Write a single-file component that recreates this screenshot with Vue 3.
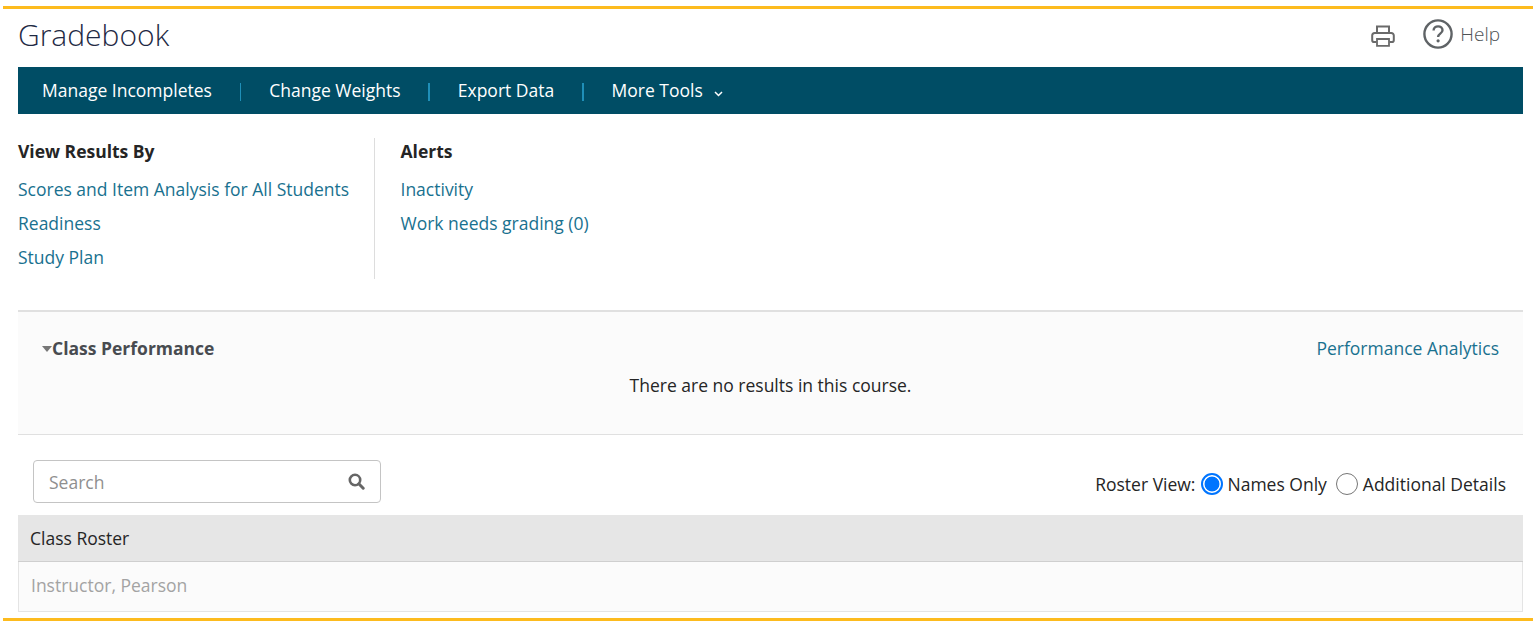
<script setup>
const nav = ['Manage Incompletes', 'Change Weights', 'Export Data']
const results = ['Scores and Item Analysis for All Students', 'Readiness', 'Study Plan']
const alerts = ['Inactivity', 'Work needs grading (0)']
</script>

<template>
  <div class="page">
    <header class="top">
      <h1>Gradebook</h1>
      <div class="tools">
        <svg class="print" width="24" height="22" viewBox="0 0 24 22" fill="none" stroke="#6a6a6a" stroke-width="2">
          <path d="M6 8V1.500h12V8" />
          <path d="M5.500 17H3A1.800 1.800 0 0 1 1.200 15.200V10.500A2.500 2.500 0 0 1 3.700 8h16.600A2.500 2.500 0 0 1 22.800 10.500v4.700A1.800 1.800 0 0 1 21 17h-2.500" />
          <path d="M6 14h12v6.800H6z" stroke-width="1.800" />
        </svg>
        <svg class="q" width="30" height="30" viewBox="0 0 30 30" fill="none">
          <circle cx="15" cy="15" r="13.600" stroke="#5f6366" stroke-width="2.400" />
          <path d="M10.600 11.600c0-2.700 2-4.200 4.500-4.200s4.400 1.500 4.400 3.800c0 3.400-4.400 3.400-4.400 6.700" stroke="#5f6366" stroke-width="2.400" />
          <circle cx="15.100" cy="21.800" r="1.600" fill="#5f6366" />
        </svg>
        <span class="help">Help</span>
      </div>
    </header>

    <nav class="nav">
      <template v-for="n in nav" :key="n">
        <a>{{ n }}</a>
        <i></i>
      </template>
      <a class="more">More Tools
        <svg width="9" height="6" viewBox="0 0 9 6" fill="none" stroke="#fff" stroke-width="1.500"><path d="M1 1l3.500 3.500L8 1" /></svg>
      </a>
    </nav>

    <section class="links">
      <div class="col first">
        <h2>View Results By</h2>
        <a v-for="r in results" :key="r">{{ r }}</a>
      </div>
      <div class="col">
        <h2>Alerts</h2>
        <a v-for="a in alerts" :key="a">{{ a }}</a>
      </div>
    </section>

    <section class="perf">
      <div class="perf-head">
        <h3><span class="tri"></span>Class Performance</h3>
        <a>Performance Analytics</a>
      </div>
      <p>There are no results in this course.</p>
    </section>

    <div class="filters">
      <div class="search">
        <span>Search</span>
        <svg width="17" height="17" viewBox="0 0 17 17" fill="none" stroke="#666">
          <circle cx="7" cy="7" r="5.200" stroke-width="2.600" />
          <path d="M10.800 10.800l4.400 4.400" stroke-width="3" stroke-linecap="round" />
        </svg>
      </div>
      <div class="roster">
        <span>Roster View:</span>
        <span class="radio on"></span>
        <span class="lbl">Names Only</span>
        <span class="radio"></span>
        <span>Additional Details</span>
      </div>
    </div>

    <div class="thead">Class Roster</div>
    <div class="trow">Instructor, Pearson</div>
  </div>
</template>

<style>
html, body { margin: 0; background: #fff; }
</style>

<style scoped>
.page {
  box-sizing: border-box;
  height: 615px;
  margin: 6px 0 0 3px;
  padding: 0 10px 0 15px;
  border-top: 3px solid #fdbb1e;
  border-bottom: 3px solid #fdbb1e;
  font-family: "Open Sans", sans-serif;
  font-size: 17.500px;
  color: #252525;
}
.top {
  height: 58px;
  display: flex;
  justify-content: space-between;
  align-items: center;
}
h1 {
  margin: 0 0 6px;
  font-size: 30px;
  font-weight: 300;
  color: #1f2a44;
  line-height: 1;
}
.tools {
  display: flex;
  align-items: center;
  padding-right: 23px;
  margin-top: -8px;
}
.print { margin: 4px 28px 0 0; }
.q { margin-right: 7px; }
.help { color: #4f5356; font-size: 19px; font-weight: 300; }
.nav {
  height: 47px;
  background: #004d65;
  display: flex;
  align-items: center;
  padding-left: 24px;
  color: #fff;
}
.nav i {
  width: 1.500px;
  height: 18px;
  background: #1f8fb8;
  margin: 2px 27.900px 0;
}
.nav a { line-height: 47px; }
.more svg { margin-left: 7px; }
.links {
  display: flex;
  margin-top: 24px;
  height: 141px;
}
.col {
  display: flex;
  flex-direction: column;
  align-items: flex-start;
}
.col.first {
  width: 356px;
  border-right: 1px solid #ddd;
  margin-right: 25.500px;
}
h2 {
  margin: 0 0 7px;
  font-size: 17.500px;
  line-height: 27px;
  font-weight: 700;
  color: #252525;
}
.col a {
  color: #19718f;
  line-height: 34px;
}
.perf {
  box-sizing: border-box;
  margin-top: 31px;
  height: 125px;
  background: #fbfbfb;
  border-top: 2px solid #e0e0e0;
  border-bottom: 1px solid #e0e0e0;
  padding: 23px 24px 0;
}
.perf-head {
  display: flex;
  justify-content: space-between;
  align-items: center;
  height: 26px;
}
h3 {
  margin: 0;
  font-size: 17.500px;
  font-weight: 700;
  color: #484b50;
  display: flex;
  align-items: center;
}
.tri {
  width: 0;
  height: 0;
  border: 5px solid transparent;
  border-top: 6px solid #777;
  border-bottom: 0;
  margin-top: 1px;
}
.perf-head a { color: #19718f; }
.perf p {
  margin: 11px 0 0;
  text-align: center;
  line-height: 26px;
}
.filters {
  height: 80px;
  display: flex;
  justify-content: space-between;
  align-items: flex-start;
  padding: 25px 17px 0 15px;
  box-sizing: border-box;
}
.search {
  box-sizing: border-box;
  width: 348px;
  height: 43px;
  border: 1px solid #c4c4c4;
  border-radius: 4px;
  display: flex;
  justify-content: space-between;
  align-items: center;
  padding: 0 15px;
  color: #8f8f8f;
}
.roster {
  display: flex;
  align-items: center;
  height: 46px;
  margin-top: 1px;
}
.radio {
  box-sizing: border-box;
  width: 22px;
  height: 22px;
  border-radius: 50%;
  border: 1.500px solid #767676;
  margin: 0 5px 0 7px;
}
.lbl { margin-right: 2px; }
.radio.on {
  border: 2px solid #0075ff;
  margin: 0 4px 0 6px;
  background: radial-gradient(circle, #0075ff 0 7px, #fff 7.800px);
}
.thead {
  box-sizing: border-box;
  height: 47px;
  line-height: 46px;
  background: #e6e6e6;
  border-bottom: 1px solid #cfcfcf;
  padding-left: 12px;
}
.trow {
  box-sizing: border-box;
  height: 50px;
  line-height: 47px;
  background: #fbfbfb;
  border: 1px solid #e4e4e4;
  border-top: 0;
  padding-left: 12px;
  color: #a3a3a3;
}
</style>
